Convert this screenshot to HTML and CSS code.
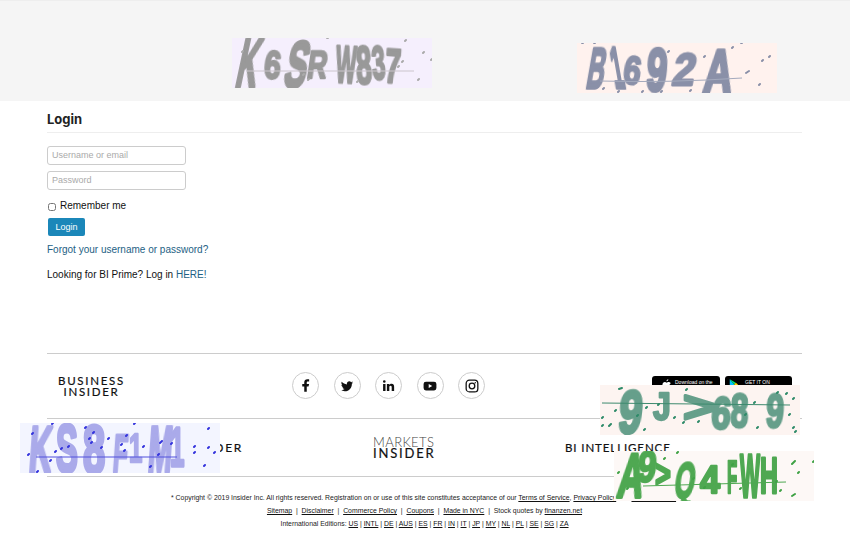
FILE: index.html
```html
<!DOCTYPE html>
<html lang="en">
<head>
<meta charset="UTF-8">
<meta name="viewport" content="width=device-width, initial-scale=1.0">
<title>Login - Business Insider</title>
<link rel="stylesheet" href="styles.css">
</head>
<body>
<header class="top-band"></header>

<main class="wrap">
    <h1 class="page-title">Login</h1>
    <form class="login-form">
        <input class="field" type="text" placeholder="Username or email">
        <input class="field" type="password" placeholder="Password">
        <label class="remember"><input type="checkbox"> Remember me</label>
        <button class="login-btn" type="button">Login</button>
    </form>
    <p class="forgot"><a href="#">Forgot your username or password?</a></p>
    <p class="prime">Looking for BI Prime? Log in <a href="#">HERE!</a></p>
</main>

<footer class="wrap site-footer">
    <div class="footer-row row-main">
        <div class="logo logo-bi"><span>BUSINESS</span><span>INSIDER</span></div>
        <div class="social">
            <a class="social-icon" href="#"><svg viewBox="0 0 24 24" width="15" height="15"><path d="M14 13.5h2.8l1-4H14v-2c0-1.03 0-2 2-2h1.8V2.14C17.470 2.100 16.240 2 14.940 2 11.930 2 10 3.660 10 6.700v2.800H6.800v4H10V22h4z"/></svg></a>
            <a class="social-icon" href="#"><svg viewBox="0 0 24 24" width="14" height="14"><path d="M22.460 6c-.77.35-1.600.58-2.460.69.88-.53 1.560-1.370 1.880-2.380-.83.5-1.750.85-2.720 1.050C18.370 4.500 17.260 4 16 4c-2.350 0-4.270 1.920-4.270 4.290 0 .34.04.67.11.98C8.280 9.090 5.110 7.380 3 4.790c-.37.63-.58 1.370-.58 2.150 0 1.490.75 2.810 1.910 3.560-.71 0-1.370-.2-1.950-.5v.03c0 2.080 1.480 3.820 3.440 4.210a4.220 4.220 0 0 1-1.930.07 4.280 4.280 0 0 0 4 2.980 8.520 8.520 0 0 1-5.330 1.840c-.34 0-.68-.02-1.020-.06C3.440 20.290 5.700 21 8.120 21 16 21 20.330 14.460 20.330 8.790c0-.19 0-.37-.01-.56.84-.6 1.560-1.360 2.140-2.230z"/></svg></a>
            <a class="social-icon" href="#"><svg viewBox="0 0 24 24" width="13" height="13"><path d="M2 9h4.500v13H2zM4.250 2.200a2.450 2.450 0 1 1 0 4.900 2.450 2.450 0 0 1 0-4.900zM9 9h4.300v1.900c.65-1.150 2.100-2.250 4.200-2.250 4.200 0 4.900 2.700 4.900 6.300V22h-4.500v-6.200c0-1.600-.05-3.400-2.100-3.400-2.100 0-2.300 1.600-2.300 3.300V22H9z"/></svg></a>
            <a class="social-icon" href="#"><svg viewBox="0 0 24 24" width="14" height="14"><path fill-rule="evenodd" d="M5 4.500h14a4 4 0 0 1 4 4v7a4 4 0 0 1-4 4H5a4 4 0 0 1-4-4v-7a4 4 0 0 1 4-4zM9.800 8.500v7l6-3.500z"/></svg></a>
            <a class="social-icon" href="#"><svg class="insta" viewBox="0 0 24 24" width="14" height="14"><rect x="2" y="2" width="20" height="20" rx="5.500"/><circle cx="12" cy="12" r="4.800"/><circle class="insta-dot" cx="17.600" cy="6.400" r="1.200"/></svg></a>
        </div>
        <div class="app-badges">
            <a class="badge badge-apple" href="#"><svg viewBox="0 0 12 14" width="9" height="11"><path fill="#fff" d="M8.400 0c.1 1.100-.9 2.600-2.400 2.700C5.900 1.400 7 .2 8.400 0zM11.500 10c-.6 1.500-1.700 3.500-3 3.500-.9 0-1.300-.6-2.400-.6s-1.600.6-2.400.6C2.200 13.500.5 10.600.5 8c0-2.700 1.700-4.200 3.300-4.200 1 0 1.800.7 2.400.7.600 0 1.500-.8 2.700-.8.5 0 1.900.2 2.700 1.500-2.300 1.400-1.900 4.200.4 4.800z"/></svg><span class="badge-text">Download on the<br>App Store</span></a>
            <a class="badge badge-play" href="#"><svg viewBox="0 0 12 14" width="9" height="11"><path fill="#00c3ff" d="M1 0l6 7-6 7z"/><path fill="#00e676" d="M1 0l8 4.600L7 7z"/><path fill="#ff3d44" d="M1 14l8-4.600L7 7z"/><path fill="#ffd400" d="M9 4.600L12 7 9 9.400 7 7z"/></svg><span class="badge-text">GET IT ON<br>Google Play</span></a>
        </div>
    </div>
    <div class="footer-row row-brands">
        <div class="logo logo-tech">TECH INSIDER</div>
        <div class="logo logo-mi"><span class="mi-top">MARKETS</span><span>INSIDER</span></div>
        <div class="logo logo-intel">BI INTELLIGENCE</div>
    </div>
    <div class="legal">
        <p>* Copyright &copy; 2019 Insider Inc. All rights reserved. Registration on or use of this site constitutes acceptance of our <a href="#">Terms of Service</a>, <a href="#">Privacy Policy</a> and <a href="#">Cookies Policy</a>.</p>
        <p><a href="#">Sitemap</a> &nbsp;|&nbsp; <a href="#">Disclaimer</a> &nbsp;|&nbsp; <a href="#">Commerce Policy</a> &nbsp;|&nbsp; <a href="#">Coupons</a> &nbsp;|&nbsp; <a href="#">Made in NYC</a> &nbsp;|&nbsp; Stock quotes by <a href="#">finanzen.net</a></p>
        <p>International Editions: <a href="#">US</a> | <a href="#">INTL</a> | <a href="#">DE</a> | <a href="#">AUS</a> | <a href="#">ES</a> | <a href="#">FR</a> | <a href="#">IN</a> | <a href="#">IT</a> | <a href="#">JP</a> | <a href="#">MY</a> | <a href="#">NL</a> | <a href="#">PL</a> | <a href="#">SE</a> | <a href="#">SG</a> | <a href="#">ZA</a></p>
    </div>
</footer>

<!-- captcha images lying over the page -->
<svg class="captcha cap-gray" viewBox="0 0 200 50">
    <text transform="translate(2 49) skewX(-12) scale(.72 1.7)">K</text>
    <text transform="translate(31 40) rotate(6) scale(.75 1)">6</text>
    <text transform="translate(50 49) skewX(-12) scale(.82 1.65)">S</text>
    <text transform="translate(74 40) skewX(-8) scale(.68 .98)">R</text>
    <text transform="translate(103 44) rotate(3) scale(.54 1.3)">W</text>
    <text transform="translate(125 46) rotate(-3) scale(.7 1.32)">8</text>
    <text transform="translate(141 42) rotate(-4) scale(.6 1.18)">3</text>
    <text transform="translate(152 44) rotate(4) scale(.7 1.22)">7</text>
    <path class="cap-line" d="M15 33H182"/>
    <path class="cap-dots" d="M10 14l1-1M95 0l1 0M173 3l1-1M191 15l1-1M186 42l1-1M170 24l1-1M76 42l1-1M71 37l1-1M125 44l1-1M166 29l1-1M199 22l1-1"/>
</svg>

<svg class="captcha cap-slate" viewBox="0 0 200 50">
    <text transform="translate(8 45) skewX(-10) scale(.6 1.4)">B</text>
    <text transform="translate(38 45) skewX(10) scale(.5 1.48)">1</text>
    <text transform="translate(45 40) rotate(8) scale(.78 1.03)">6</text>
    <text transform="translate(68 47) rotate(5) scale(.92 1.55)">9</text>
    <text transform="translate(94 42) skewX(-10) scale(1 1.14)">2</text>
    <text transform="translate(125 50) skewX(-6) scale(1 1.55)">A</text>
    <path class="cap-line" d="M23 38Q90 40 165 35"/>
    <path class="cap-dots" d="M5 0l1 0M17 0l1 0M26 46l1-1M41 49l1-1M65 49l1-1M84 49l1-1M113 48l1-1M155 5l1-1M164 0l1 0M169 30l3-2M185 18l1-1M192 14l1-1M182 42l1-1M151 45l1-1M91 9l1-1M127 14l1-1"/>
</svg>

<svg class="captcha cap-blue" viewBox="0 0 200 50">
    <text transform="translate(8 49) skewX(-4) scale(.78 1.6)">K</text>
    <text transform="translate(36 49) scale(.82 1.72)">S</text>
    <text transform="translate(63 50) scale(1 1.72)">8</text>
    <text transform="translate(92 49) skewX(-4) scale(.6 1.35)">F</text>
    <text transform="translate(109 39) scale(.6 1)">1</text>
    <text transform="translate(127 49) skewX(-4) scale(.72 1.6)">M</text>
    <text transform="translate(150 43) scale(.65 1.4)">1</text>
    <path class="cap-line" d="M16 34H157"/>
    <path class="cap-dots" d="M32 1l1-1M12 11l1-1M8 32l1-1M17 49l1-1M30 38l1-1M35 29l1-1M41 26l1-1M48 24l1-1M65 5l1-1M73 10l1-1M69 16l1-1M71 20l1-1M88 16l1-1M81 25l1-1M106 13l1-1M101 22l1-1M104 28l1-1M114 1l1-1M123 24l1-1M140 20l2-2M151 21l1-1M138 32l1-1M130 44l1-1M188 6l1-1M174 24l1-1M174 30l1-1M188 25l1-1M194 30l1-1M184 43l1-1"/>
</svg>

<svg class="captcha cap-teal" viewBox="0 0 200 50">
    <text transform="translate(17 48) skewX(-6) scale(1.05 1.5)">9</text>
    <text transform="translate(53 35) scale(.8 .95)">J</text>
    <text transform="translate(83 37) scale(1.38 1.1)">&gt;</text>
    <text transform="translate(110 43) rotate(6) scale(.88 1.15)">6</text>
    <text transform="translate(130 42) rotate(2) scale(.8 1.18)">8</text>
    <text transform="translate(165 42) rotate(4) scale(.8 1.18)">9</text>
    <path class="cap-line" d="M2 18L190 20"/>
    <path class="cap-dots" d="M19 4l3-1M86 5l1-1M2 33l1-1M2 41l1-1M9 41l2-2M15 26l1-1M37 31l1-1M46 23l1-1M58 20l1-1M74 33l1-1M83 38l1-1M98 37l1-1M44 45l1-1M157 43l1-1M145 30l1-1M154 18l1-1M177 8l1-1M186 9l1-1M193 14l1-1M189 30l1-1M193 43l1-1M195 47l1-1"/>
</svg>

<svg class="captcha cap-green" viewBox="0 0 200 50">
    <text transform="translate(2 46) skewX(-8) scale(.88 1.55)">A</text>
    <text transform="translate(22 31) skewX(-6) scale(.85 1.1)">9</text>
    <text transform="translate(41 36) scale(.68 .95)">&gt;</text>
    <text transform="translate(59 47) skewX(-8) scale(.64 1.25)">Q</text>
    <text transform="translate(86 42) scale(.9 .97)">4</text>
    <text transform="translate(113 42) scale(.42 1.14)">F</text>
    <text transform="translate(126 46) scale(.53 1.55)">W</text>
    <text transform="translate(146 42) scale(.62 1.25)">H</text>
    <path class="cap-line" d="M29 35L172 31"/>
    <path class="cap-dots" d="M63 2l1-1M4 22l1-1M13 38l1-1M90 37l1-1M79 28l1-1M178 13l3-3M184 22l1-1M199 11l1-1M178 45l3-2M166 40l1-1M162 31l1-1M126 38l1-1M118 14l1-1M50 8l1-1"/>
</svg>
</body>
</html>
```

FILE: styles.css
```css
html, body {
    margin: 0;
    padding: 0;
    overflow: hidden;
}
body {
    position: relative;
    height: 540px;
    font-family: "Liberation Sans", Arial, sans-serif;
    font-size: 10px;
    color: #111;
    background: #fff;
}
a {
    color: #1d6184;
    text-decoration: none;
}
.top-band {
    height: 100px;
    background: #f5f5f5;
    border-top: 1px solid #eee;
}
.wrap {
    width: 755px;
    margin: 0 0 0 47px;
}
main.wrap {
    height: 252px;
}
.page-title {
    margin: 0 0 13px;
    padding: 10px 0 6px;
    height: 15px;
    font-family: Inter, sans-serif;
    font-size: 13px;
    line-height: 16px;
    font-weight: 700;
    color: #222;
    border-bottom: 1px solid #eee;
}
.login-form {
    display: flex;
    flex-direction: column;
    align-items: flex-start;
}
.field {
    box-sizing: border-box;
    width: 139px;
    height: 19px;
    margin: 0 0 6px;
    padding: 0 4px 1px;
    font-family: inherit;
    font-size: 9px;
    border: 1px solid #ccc;
    border-radius: 3px;
    outline: none;
}
.field::placeholder {
    color: #aaa;
    opacity: 1;
}
.remember {
    display: flex;
    align-items: center;
    height: 14px;
    margin: 3px 0 5px;
    line-height: 14px;
    gap: 4px;
}
.remember input {
    width: 8px;
    height: 8px;
    margin: 1px 0 0 1px;
}
.login-btn {
    width: 37px;
    height: 18px;
    margin-left: 1px;
    padding: 0;
    font-family: inherit;
    font-size: 9px;
    color: #fff;
    background: #1b87b9;
    border: none;
    border-radius: 2px;
}
.forgot, .prime {
    margin: 0;
    line-height: 14px;
}
.forgot {
    margin-top: 7px;
}
.prime {
    margin-top: 11px;
}
.site-footer {
    border-top: 1px solid #ccc;
}
.footer-row {
    display: flex;
    border-bottom: 1px solid #ccc;
}
.row-main {
    height: 64px;
    align-items: center;
    justify-content: space-between;
}
.row-brands {
    height: 57px;
    align-items: flex-start;
}
.logo {
    font-family: Lato, sans-serif;
    color: #111;
    letter-spacing: 1.6px;
    -webkit-text-stroke: .2px #111;
}
.logo-bi {
    display: flex;
    flex-direction: column;
    align-items: center;
    width: 67px;
    margin-left: 11px;
    margin-top: 1px;
    font-size: 11.5px;
    line-height: 10.5px;
    letter-spacing: 1.7px;
}
.social {
    display: flex;
    gap: 14.5px;
    margin-top: -1px;
}
.social-icon {
    box-sizing: border-box;
    display: flex;
    align-items: center;
    justify-content: center;
    width: 27px;
    height: 27px;
    border: 1px solid #ccc;
    border-radius: 50%;
}
.social-icon svg {
    fill: #111;
}
.social-icon .insta {
    fill: none;
    stroke: #111;
    stroke-width: 2.2;
}
.social-icon .insta-dot {
    fill: #111;
    stroke: none;
}
.app-badges {
    display: flex;
    gap: 5px;
    margin-right: 10px;
    align-self: flex-start;
    margin-top: 22px;
}
.badge {
    display: flex;
    align-items: flex-start;
    box-sizing: border-box;
    height: 22px;
    padding-top: 3px;
    color: #fff;
    background: #000;
    border-radius: 3px;
}
.badge-apple {
    width: 68px;
    padding-left: 10px;
    gap: 4px;
}
.badge-play {
    width: 67px;
    padding-left: 4px;
    gap: 7px;
}
.badge-text {
    font-size: 5px;
    line-height: 6px;
    white-space: nowrap;
}
.logo-tech {
    width: 196px;
    margin-top: 23px;
    font-size: 12px;
    line-height: 12px;
    letter-spacing: 1.7px;
    text-align: right;
}
.logo-mi {
    display: flex;
    flex-direction: column;
    width: 62px;
    margin: 18px 0 0 130px;
    font-size: 13px;
    line-height: 11px;
    letter-spacing: 1.8px;
}
.mi-top {
    font-weight: 300;
    color: #444;
    letter-spacing: .4px;
    -webkit-text-stroke: 0;
}
.logo-intel {
    margin: 23px 0 0 130px;
    font-size: 11.5px;
    line-height: 12px;
    letter-spacing: .9px;
    white-space: nowrap;
}
.legal {
    margin-top: 14px;
    text-align: center;
    font-size: 6.88px;
    line-height: 13px;
    color: #222;
}
.legal p {
    margin: 0;
}
.legal a {
    color: #111;
    text-decoration: underline;
}
.captcha {
    position: absolute;
    width: 200px;
    height: 50px;
}
.captcha text {
    font-family: "Liberation Sans", sans-serif;
    font-size: 40px;
    font-weight: 700;
    stroke-width: 2.4;
    stroke-linejoin: round;
    filter: blur(.35px);
}
.cap-line {
    fill: none;
    stroke-width: 1;
}
.cap-dots {
    fill: none;
    stroke-width: 2;
    stroke-linecap: round;
}
.cap-gray {
    left: 232px;
    top: 38px;
    background: #f5effd;
}
.cap-gray text {
    fill: #999;
    stroke: #999;
}
.cap-gray .cap-line {
    stroke: #cbc5cc;
}
.cap-gray .cap-dots {
    stroke: #aaa;
}
.cap-slate {
    left: 577px;
    top: 43px;
    background: #fff2ee;
}
.cap-slate text {
    fill: #8a90a8;
    stroke: #8a90a8;
}
.cap-slate .cap-line {
    stroke: #a4aabd;
}
.cap-slate .cap-dots {
    stroke: #8a90a8;
}
.cap-blue {
    left: 20px;
    top: 423px;
    background: #f3f5ff;
}
.cap-blue text {
    fill: #aaaaea;
    stroke: #aaaaea;
}
.cap-blue .cap-line {
    stroke: #5050dd;
}
.cap-blue .cap-dots {
    stroke: #3333dd;
}
.cap-teal {
    left: 600px;
    top: 385px;
    background: #fdf4f1;
}
.cap-teal text {
    fill: #669f8b;
    stroke: #669f8b;
}
.cap-teal .cap-line {
    stroke: #3d8a6e;
}
.cap-teal .cap-dots {
    stroke: #2d8a68;
}
.cap-green {
    left: 614px;
    top: 451px;
    background: #fdf8f6;
}
.cap-green text {
    fill: #4fa852;
    stroke: #4fa852;
}
.cap-green .cap-line {
    stroke: #4fa852;
}
.cap-green .cap-dots {
    stroke: #3fa245;
}
```
